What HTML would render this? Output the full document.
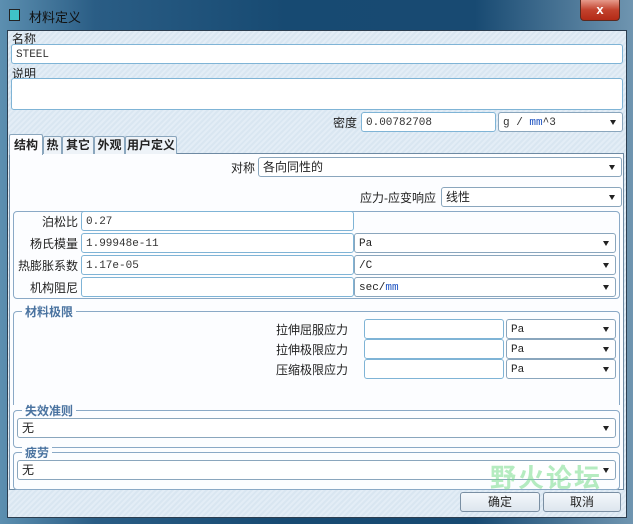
<!DOCTYPE html>
<html><head><meta charset="utf-8"><style>
*{box-sizing:border-box;margin:0;padding:0}
body{width:633px;height:524px;overflow:hidden;position:relative;font-family:"Liberation Sans","Noto Sans CJK SC",sans-serif;font-size:12px;color:#222;background:#1c4a70}
.a{position:absolute}
.frame{left:0;top:0;width:633px;height:524px;background:linear-gradient(90deg,#5c8fb0 0%,#2a5d85 15%,#174a72 45%,#184a72 75%,#6f95b0 100%)}
.client{left:7px;top:30px;width:620px;height:488px;background:repeating-linear-gradient(135deg,#d9e6f1 0 2px,#e3edf6 2px 4px);border:1px solid #2c3e50}
.inp{background:#fff;border:1px solid #7fb4d6;border-radius:3px;font-family:"Liberation Mono","Noto Sans CJK SC",monospace;font-size:11px;padding:3px 4px 1px;line-height:14px;color:#333}
.sel{background:#fff;border:1px solid #8aa6bd;border-radius:3px;font-size:12px;padding:2px 4px;line-height:15px}
.sel::after{content:"";position:absolute;right:6px;top:7px;border:3.5px solid transparent;border-top:5px solid #222}
.mono{font-family:"Liberation Mono",monospace;font-size:11px;padding-top:3px;line-height:14px}
.lbl{font-size:12px;white-space:nowrap}
.grp{border:1px solid #8aa9c6;border-radius:4px}
.gt{font-weight:bold;color:#4a73a0;background:#fcfdff;padding:0 3px;font-size:12px}
.tab{top:136px;height:18px;border:1px solid #8aa6bd;border-bottom:none;background:#eef3f8;font-weight:bold;font-size:12px;text-align:center;line-height:16px;border-radius:2px 2px 0 0;white-space:nowrap}
.btn{border:1px solid #7a8fa3;border-radius:3px;background:linear-gradient(#f4f8fb,#dde6ee);text-align:center;line-height:18px;font-size:12px}
</style></head><body>
<div class="a frame"></div>
<div class="a" style="left:9px;top:9px;width:11px;height:12px;background:#3fc3c8;border:1px solid #222"></div>
<div class="a" style="left:29px;top:7px;font-size:13px;color:#111">材料定义</div>
<div class="a" style="left:580px;top:0;width:40px;height:21px;background:linear-gradient(#e69b8c,#c2422d 50%,#b32a16);border:1px solid #5a2a20;border-top:none;border-radius:0 0 4px 4px;color:#fff;font-weight:bold;text-align:center;line-height:19px;font-size:13px">x</div>
<div class="a client"></div>
<div class="a lbl" style="left:12px;top:30px">名称</div>
<div class="a inp" style="left:11px;top:44px;width:612px;height:20px">STEEL</div>
<div class="a lbl" style="left:12px;top:65px">说明</div>
<div class="a inp" style="left:11px;top:78px;width:612px;height:32px"></div>
<div class="a lbl" style="left:333px;top:114px">密度</div>
<div class="a inp" style="left:361px;top:112px;width:135px;height:20px">0.00782708</div>
<div class="a sel mono" style="left:498px;top:112px;width:125px;height:20px;color:#333">g / <span style="color:#1a50c0">mm</span>^3</div>
<div class="a" style="left:9px;top:153px;width:615px;height:337px;background:#fcfdff;border:1px solid #6e8aa3"></div>
<div class="a tab" style="left:9px;top:134px;width:34px;height:21px;background:#fcfdff;line-height:20px">结构</div>
<div class="a tab" style="left:43px;width:19px">热</div>
<div class="a tab" style="left:62px;width:32px">其它</div>
<div class="a tab" style="left:94px;width:31px">外观</div>
<div class="a tab" style="left:125px;width:52px">用户定义</div>
<div class="a lbl" style="left:231px;top:159px">对称</div>
<div class="a sel" style="left:258px;top:157px;width:364px;height:20px">各向同性的</div>
<div class="a lbl" style="left:360px;top:189px">应力-应变响应</div>
<div class="a sel" style="left:441px;top:187px;width:181px;height:20px">线性</div>
<div class="a grp" style="left:13px;top:211px;width:607px;height:88px"></div>
<div class="a lbl" style="left:42px;top:213px">泊松比</div>
<div class="a inp" style="left:81px;top:211px;width:273px;height:20px">0.27</div>
<div class="a lbl" style="left:30px;top:235px">杨氏模量</div>
<div class="a inp" style="left:81px;top:233px;width:273px;height:20px">1.99948e-11</div>
<div class="a sel mono" style="left:354px;top:233px;width:262px;height:20px">Pa</div>
<div class="a lbl" style="left:18px;top:257px">热膨胀系数</div>
<div class="a inp" style="left:81px;top:255px;width:273px;height:20px">1.17e-05</div>
<div class="a sel mono" style="left:354px;top:255px;width:262px;height:20px">/C</div>
<div class="a lbl" style="left:30px;top:279px">机构阻尼</div>
<div class="a inp" style="left:81px;top:277px;width:273px;height:20px"></div>
<div class="a sel mono" style="left:354px;top:277px;width:262px;height:20px">sec/<span style="color:#1a50c0">mm</span></div>
<div class="a grp" style="left:13px;top:311px;width:607px;height:94px;border-bottom:none;border-radius:4px 4px 0 0"></div>
<div class="a gt" style="left:22px;top:303px">材料极限</div>
<div class="a lbl" style="left:276px;top:321px">拉伸屈服应力</div>
<div class="a inp" style="left:364px;top:319px;width:140px;height:20px"></div>
<div class="a sel mono" style="left:506px;top:319px;width:110px;height:20px">Pa</div>
<div class="a lbl" style="left:276px;top:341px">拉伸极限应力</div>
<div class="a inp" style="left:364px;top:339px;width:140px;height:20px"></div>
<div class="a sel mono" style="left:506px;top:339px;width:110px;height:20px">Pa</div>
<div class="a lbl" style="left:276px;top:361px">压缩极限应力</div>
<div class="a inp" style="left:364px;top:359px;width:140px;height:20px"></div>
<div class="a sel mono" style="left:506px;top:359px;width:110px;height:20px">Pa</div>
<div class="a grp" style="left:13px;top:410px;width:607px;height:38px"></div>
<div class="a gt" style="left:22px;top:402px">失效准则</div>
<div class="a sel" style="left:17px;top:418px;width:599px;height:20px">无</div>
<div class="a grp" style="left:13px;top:452px;width:607px;height:38px"></div>
<div class="a gt" style="left:22px;top:444px">疲劳</div>
<div class="a sel" style="left:17px;top:460px;width:599px;height:20px">无</div>
<div class="a btn" style="left:460px;top:492px;width:80px;height:20px">确定</div>
<div class="a btn" style="left:543px;top:492px;width:78px;height:20px">取消</div>
<div class="a" style="left:490px;top:458px;font-size:26px;font-weight:bold;color:rgba(120,220,140,0.55);letter-spacing:2px">野火论坛</div>
</body></html>
